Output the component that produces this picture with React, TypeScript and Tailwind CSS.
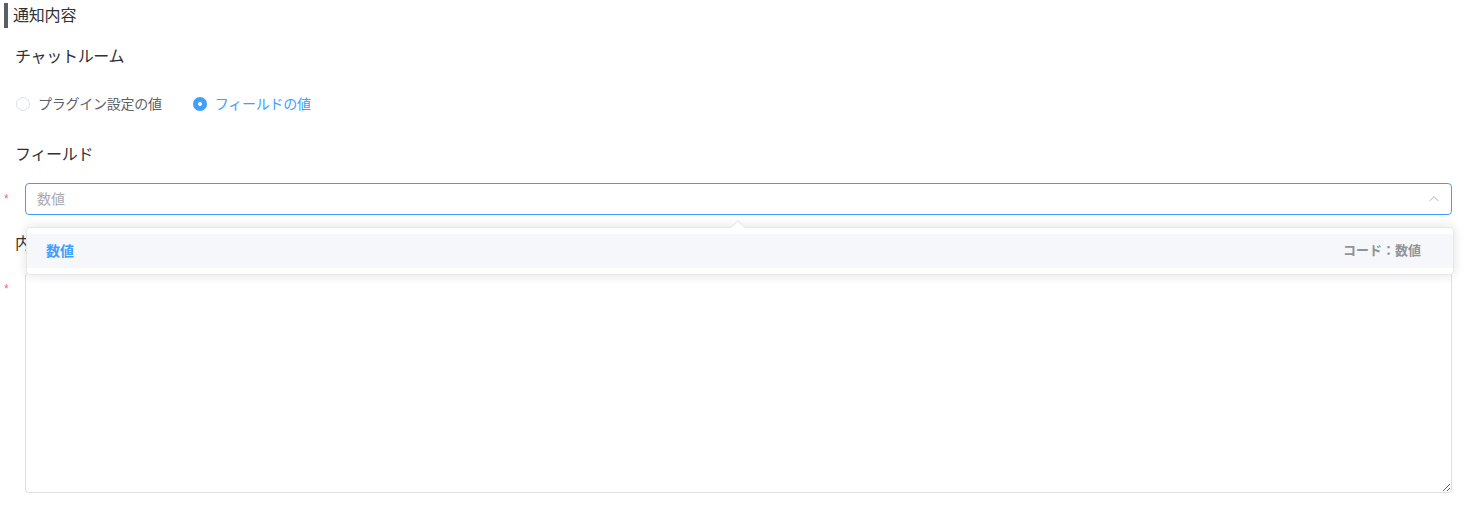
import React from "react";

const font = {
  fontFamily:
    '"Helvetica Neue", "Liberation Sans", "Noto Sans CJK JP", sans-serif',
};

export default function App() {
  return (
    <div
      className="relative w-[1464px] h-[511px] bg-white overflow-hidden"
      style={font}
    >
      {/* section header */}
      <div className="flex items-center pt-[3px]">
        <div className="ml-[4px] w-[4px] h-[25px] bg-[#585d66]" />
        <div className="ml-[5px] text-[16px] leading-[25px] text-[#303133] tracking-[-0.2px]">
          通知内容
        </div>
      </div>

      {/* チャットルーム */}
      <div className="mt-[18px] pl-[15px] text-[16px] leading-[22px] text-[#303133] tracking-[-0.3px]">
        チャットルーム
      </div>

      {/* radios */}
      <div className="mt-[26px] pl-[16px] flex items-center h-[20px] text-[14px] tracking-[-0.25px]">
        <label className="flex items-center">
          <span className="w-[14px] h-[14px] rounded-full border border-[#dcdfe6] bg-white" />
          <span className="ml-[8px] text-[#606266]">プラグイン設定の値</span>
        </label>
        <label className="flex items-center ml-[31px]">
          <span className="w-[14px] h-[14px] rounded-full bg-[#409eff] flex items-center justify-center">
            <span className="w-[4px] h-[4px] rounded-full bg-white" />
          </span>
          <span className="ml-[8px] text-[#409eff]">フィールドの値</span>
        </label>
      </div>

      {/* フィールド */}
      <div className="mt-[30px] pl-[15px] text-[16px] leading-[22px] text-[#303133] tracking-[-0.3px]">
        フィールド
      </div>

      {/* select */}
      <div className="mt-[17px] flex">
        <div className="w-[25px] pl-[4px] pt-[10px] text-[12px] leading-[12px] text-[#f56c6c]">
          *
        </div>
        <div className="flex-1 mr-[12px] h-[32px] rounded-[4px] border border-[#409eff] flex items-center pl-[11px] pr-[10px]">
          <span className="flex-1 text-[14px] text-[#a8abb2]">数値</span>
          <svg
            width="14"
            height="14"
            viewBox="0 0 24 24"
            fill="none"
            stroke="#a8abb2"
            strokeWidth="1.6"
            strokeLinecap="round"
            strokeLinejoin="round"
          >
            <path d="M5 15l7-7 7 7" />
          </svg>
        </div>
      </div>

      {/* 内容 label */}
      <div className="mt-[18px] pl-[15px] text-[16px] leading-[22px] text-[#303133]">
        内容
      </div>

      {/* textarea */}
      <div className="mt-[17px] flex">
        <div className="w-[25px] pl-[4px] pt-[11px] text-[12px] leading-[12px] text-[#f56c6c]">
          *
        </div>
        <textarea className="flex-1 mr-[12px] h-[221px] rounded-[4px] border border-[#dcdfe6] outline-none resize-y" />
      </div>

      {/* dropdown popper */}
      <div className="absolute left-[26px] top-[227px] w-[1428px] rounded-[4px] border border-[#e4e7ed] bg-white py-[6px] shadow-[0_0_12px_rgba(0,0,0,0.12)]">
        <div className="absolute -top-[6px] left-[706px] w-[10px] h-[10px] rotate-45 bg-white border-l border-t border-[#e4e7ed]" />
        <div className="relative h-[34px] bg-[#f5f7fa] flex items-center pl-[19px] pr-[32px]">
          <span className="flex-1 text-[14px] font-bold text-[#409eff]">
            数値
          </span>
          <span className="text-[13px] font-bold text-[#909399]">
            コード：数値
          </span>
        </div>
      </div>
    </div>
  );
}
